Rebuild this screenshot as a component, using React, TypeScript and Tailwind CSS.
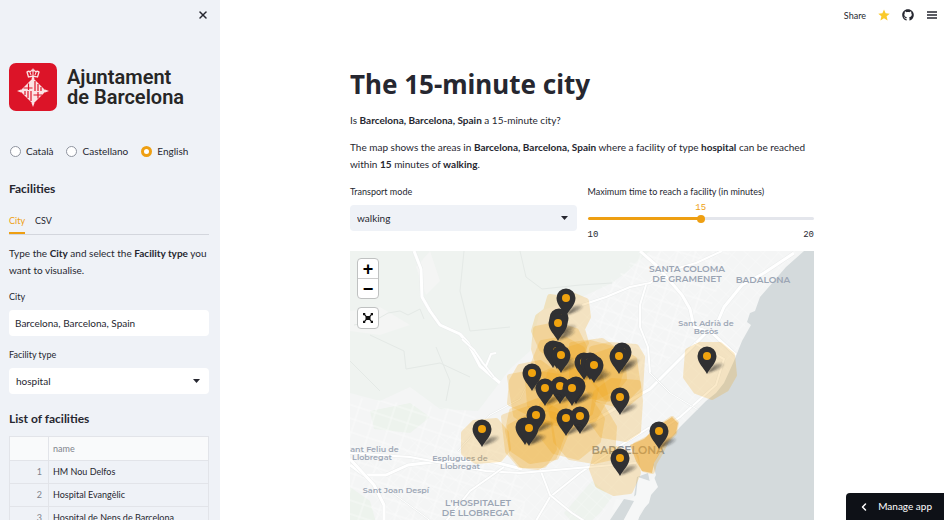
import { useState } from 'react'
import type { ReactNode } from 'react'
import { FaGithub } from 'react-icons/fa'
import { X, ChevronLeft } from 'lucide-react'

const languages = ['Català', 'Castellano', 'English']

const facilities = [
  'HM Nou Delfos',
  'Hospital Evangèlic',
  'Hospital de Nens de Barcelona',
  'Hospital de Barcelona',
]

// head centre of every marker, back to front
const pins = [
  [216, 47],
  [209, 67],
  [208, 72],
  [203, 99],
  [207, 100],
  [211, 104],
  [272, 101],
  [269, 105],
  [234, 111],
  [240, 111],
  [244, 114],
  [357, 105],
  [182, 122],
  [226, 135],
  [210, 135],
  [195, 137],
  [222, 137],
  [270, 146],
  [186, 164],
  [230, 165],
  [216, 167],
  [175, 176],
  [179, 177],
  [132, 178],
  [309, 180],
  [270, 207],
]

// walking areas around the facilities
const areas = [
  'M200 46L214 48L222 44L236 50L238 66L232 78L236 92L230 104L206 108L192 98L184 80L188 66L196 60Z',
  'M186 78L206 74L226 80L234 96L232 118L222 134L202 134L190 118L184 98Z',
  'M192 92L214 88L232 98L238 116L230 138L208 144L192 134L184 112Z',
  'M162 130L170 116L190 112L206 124L208 144L196 158L176 160L160 152Z',
  'M160 126L182 122L210 126L220 144L208 168L184 176L166 164Z',
  'M178 130L206 118L232 122L246 138L240 162L220 174L194 170L180 154Z',
  'M200 122L226 116L250 126L256 146L244 168L220 176L202 164L196 142Z',
  'M214 100L240 92L262 98L272 116L266 136L246 146L222 138L210 120Z',
  'M222 94L252 90L272 104L274 128L258 148L236 144L222 126Z',
  'M242 98L260 94L286 96L292 106L290 142L278 152L256 146L244 130Z',
  'M236 108L266 98L284 108L288 136L270 154L246 148L234 132Z',
  'M246 142L262 130L288 132L290 150L288 180L276 188L252 184L242 170Z',
  'M192 154L216 144L240 150L252 168L248 190L228 206L204 200L190 182Z',
  'M202 158L232 146L252 156L264 176L262 206L244 210L220 206L206 190Z',
  'M154 166L178 158L204 164L212 184L204 206L188 216L170 214L158 200Z',
  'M162 160L188 150L206 160L216 182L206 206L180 210L162 198L158 180Z',
  'M160 176L182 164L200 174L204 198L194 214L172 214L162 202Z',
  'M114 182L124 172L146 170L156 182L158 198L150 208L126 210L114 202Z',
  'M338 100L350 94L370 94L382 104L384 124L376 138L362 146L346 140L336 126Z',
  'M286 194L298 188L308 178L322 168L326 172L324 182L316 190L310 202L304 212L302 220L294 218L290 206Z',
  'M246 204L266 198L286 206L288 222L280 240L264 242L248 234L242 218Z',
]

const roads = [
  { w: 3, d: 'M64 0L71 18L72 46L80 60L90 74L110 83L118 92L130 115L150 132' },
  { w: 2, d: 'M112 88L124 99L133 112L144 126M136 115L141 103L146 102' },
  { w: 2, d: 'M232 54L256 46L280 36L300 32L318 20L346 12L372 0' },
  { w: 3, d: 'M290 0L306 14L320 30L332 44L340 58L344 76L362 82L386 104' },
  { w: 2, d: 'M296 34L290 54L290 76L298 96L300 122' },
  { w: 3, d: 'M444 2L414 22L392 34L374 56L368 70' },
  { w: 3, d: 'M236 174L300 138L346 92L356 82' },
  { w: 2, d: 'M344 92L374 108L366 134L330 166L312 178' },
  { w: 3, d: 'M0 214L14 224L36 224L58 214L92 210L140 210L172 218' },
  { w: 3, d: 'M0 208L24 234L34 254L34 282L44 360' },
  { w: 2, d: 'M180 280L200 246L230 222L268 196L300 176' },
  { w: 2, d: 'M190 218L200 244L222 262L250 280' },
  { w: 2, d: 'M0 202L60 206L136 220L170 222L286 212' },
  { w: 2, d: 'M60 360L96 270L120 240L154 216' },
  { w: 1, d: 'M108 200L140 164L170 148L180 128' },
  { w: 1, d: 'M300 122L320 142L350 160' },
  { w: 1, d: 'M40 240L70 262L120 300L200 320' },
]

const places = [
  { x: 337, y: 21, lines: ['SANTA COLOMA', 'DE GRAMENET'], big: true },
  { x: 413, y: 32, lines: ['BADALONA'], big: true },
  { x: 356, y: 75, lines: ['Sant Adrià de', 'Besòs'], big: false },
  { x: 22, y: 201, lines: ['Sant Feliu de', 'Llobregat'], big: false },
  { x: 110, y: 210, lines: ['Esplugues de', 'Llobregat'], big: false },
  { x: 46, y: 242, lines: ['Sant Joan Despí'], big: false },
  { x: 128, y: 255, lines: ["L'HOSPITALET", 'DE LLOBREGAT'], big: true },
]

function Pin({ x, y }: { x: number; y: number }) {
  return (
    <g transform={`translate(${x} ${y})`}>
      <path d="M0 17L7 9Q13 6 17 8Q17 11 9 14Z" fill="url(#shade)" filter="url(#soft)" />
      <path
        d="M0 18C-3 12-9.500 7-9.500 0A9.500 9.500 0 0 1 9.500 0C9.500 7 3 12 0 18Z"
        fill="#303032"
      />
      <circle r="4" fill="#f0a30f" />
    </g>
  )
}

function CityMap() {
  return (
    <svg
      className="block w-full h-full"
      viewBox="0 0 464 360"
      preserveAspectRatio="xMidYMin slice"
      fontFamily="Montserrat, Inter, sans-serif"
    >
      <defs>
        <linearGradient id="shade" x1="0" x2="1">
          <stop offset="0" stopColor="#222" stopOpacity="0.8" />
          <stop offset="1" stopColor="#222" stopOpacity="0.15" />
        </linearGradient>
        <filter id="soft" x="-30%" y="-50%" width="160%" height="200%">
          <feGaussianBlur stdDeviation="1" />
        </filter>
        <pattern id="streets" width="11" height="11" patternUnits="userSpaceOnUse" patternTransform="rotate(42)">
          <path d="M0 0H11M0 0V11" stroke="#fff" strokeWidth="1" />
        </pattern>
        <pattern id="lanes" width="17" height="13" patternUnits="userSpaceOnUse" patternTransform="rotate(18)">
          <path d="M0 3H17M6 0V13" stroke="#fff" strokeWidth="1" />
        </pattern>
      </defs>
      <rect width="464" height="360" fill="#f4f5f5" />
      <path
        d="M0 0H300L278 20L262 32L232 46L190 60L180 100L160 118L128 160L90 158L60 136L30 150L0 142Z"
        fill="#eff3f0"
      />
      <path d="M80 0L90 30L76 44L66 16ZM0 60L30 56L60 74L30 84L0 80Z" fill="#f4f5f4" />
      <path d="M20 160L60 152L80 166L60 182L24 178ZM0 236L20 250L34 300L0 310Z" fill="#edf3ed" />
      <path d="M242 230L262 246L250 262L230 280L214 262Z" fill="#eef3ee" />
      <path
        d="M232 50L300 0H454L400 60L386 110L310 200L270 240L240 280L230 360H60L30 280L0 200L60 190L150 170L190 100Z"
        fill="url(#streets)"
        opacity="0.4"
      />
      <path d="M0 146L120 160L170 220L190 360H0ZM240 60L290 0H380L350 90L280 130Z" fill="url(#lanes)" opacity="0.5" />
      <path
        d="M4 74L24 70L38 62L50 60L58 64L70 58L74 68M114 0L110 40L120 80L160 76M170 0L176 26L192 38L230 34L262 32M20 84L54 100L56 118L90 112L120 126M86 96L100 130L96 150M0 110L30 140"
        fill="none"
        stroke="#e4e9e6"
      />
      {roads.map((road) => (
        <g key={road.d} fill="none" strokeLinejoin="round">
          <path d={road.d} stroke="#eaecec" strokeWidth={road.w + 1} />
          <path d={road.d} stroke="#fff" strokeWidth={road.w} />
        </g>
      ))}
      <path
        d="M454 0L436 16L424 30L410 46L405 60L400 62L397 71L401 74L392 90L384 110L374 132L366 142L356 150L342 164L330 176L318 190L308 204L303 214L306 224L302 232L300 246L294 258L288 268L286 360H464V0Z"
        fill="#d4dadc"
      />
      <path d="M287 226L298 222L300 232L294 248L284 246Z" fill="#d4dadc" />
      <path
        d="M288 226L300 230L304 226L308 236L301 244L299 252L290 262L287 274L280 290L270 300L264 360H242L248 300L256 286L272 262L262 258L266 248L278 250L286 244Z"
        fill="#f6f7f7"
      />
      <path d="M258 272L274 248L284 250L272 272L266 296L254 290Z" fill="#d4dadc" />
      {places.map((place) => (
        <text
          key={place.lines[0]}
          fill={place.big ? '#9ba5b4' : '#9da7b6'}
          fontSize={place.big ? 9 : 8}
          fontWeight="600"
          textAnchor="middle"
        >
          {place.lines.map((line, i) => (
            <tspan key={line} x={place.x} y={place.y + i * (place.big ? 10 : 8)}>
              {line}
            </tspan>
          ))}
        </text>
      ))}
      <text x="278" y="203" fill="#8b929c" fontSize="11" fontWeight="600" textAnchor="middle">
        BARCELONA
      </text>
      {areas.map((d) => (
        <path key={d} d={d} fill="#f0a30f" stroke="#f0a30f" strokeWidth="6" strokeLinejoin="round" opacity="0.22" />
      ))}
      <path
        d="M280 194L294 188L304 178L322 166L328 172L326 182L316 192L310 202L304 212L302 222L292 220L286 210Z"
        fill="#eca42c"
        opacity="0.5"
      />
      {pins.map(([x, y]) => (
        <Pin key={`${x}-${y}`} x={x} y={y} />
      ))}
    </svg>
  )
}

function Crest() {
  return (
    <svg className="w-12 h-12 shrink-0" viewBox="0 0 48 48" role="img" aria-label="Ajuntament de Barcelona">
      <rect width="48" height="48" rx="7" fill="#dc1428" />
      <path
        d="M19.500 14L18 9Q20 7.500 21 9Q22.500 7 24 8Q25.500 7 27 9Q28 7.500 30 9L28.500 14Q24 12.500 19.500 14Z"
        fill="none"
        stroke="#fbe3e4"
        strokeWidth="1.300"
      />
      <path d="M24 5.500V13M22.500 7H25.500M21 9.500L22 12M27 9.500L26 12" stroke="#fbe3e4" />
      <path d="M24 15L37 28L24 41L11 28Z" fill="#fbe3e4" />
      <g stroke="#dc1428">
        <path d="M19.500 20.500V27M14.500 25H23.500M29 29V35.500M24.500 32H33" strokeWidth="1.200" />
        <path d="M26 18V28M29 21V28M32 24V28M22 28V38M19 28V35M16 28V32" strokeWidth="1.200" />
      </g>
      <path d="M24 12L25.500 16H22.500ZM24 44L25.500 40H22.500ZM8 28L12 26.500V29.500ZM40 28L36 26.500V29.500Z" fill="#fbe3e4" />
    </svg>
  )
}

function Select({ id, label, value, className }: { id: string; label: string; value: string; className: string }) {
  return (
    <div>
      <label htmlFor={id} className="block text-[9px] leading-[14px] mb-[6px]">
        {label}
      </label>
      <div className="relative">
        <select id={id} className={`block w-full h-[26px] rounded-sm px-[7px] appearance-none outline-none ${className}`}>
          <option>{value}</option>
        </select>
        <svg className="absolute right-[9px] top-[11px] w-[7px] h-1 pointer-events-none" viewBox="0 0 7 4">
          <path d="M0 0H7L3.500 4Z" fill="#262730" />
        </svg>
      </div>
    </div>
  )
}

function Heading({ children }: { children: ReactNode }) {
  return <h2 className="text-[12px] leading-4 font-bold">{children}</h2>
}

function Sidebar() {
  const [language, setLanguage] = useState('English')

  return (
    <aside className="w-[220px] shrink-0 bg-[#eff2f7] pl-[9px] pr-[11px] overflow-hidden">
      <div className="flex justify-end pt-[9px]">
        <button aria-label="Close sidebar" className="w-3 h-3">
          <X className="w-3 h-3" strokeWidth={3} />
        </button>
      </div>
      <div className="flex items-center gap-[10px] mt-[42px]">
        <Crest />
        <div className="font-['Roboto',sans-serif] font-semibold text-[20px] leading-5 text-[#262626]">
          Ajuntament
          <br />
          de Barcelona
        </div>
      </div>
      <div className="flex gap-[13px] mt-8 pl-[1px]">
        {languages.map((name) => (
          <label key={name} className="flex items-center gap-[5px] leading-4">
            <input
              type="radio"
              name="language"
              checked={language === name}
              onChange={() => setLanguage(name)}
              className="appearance-none w-[11px] h-[11px] rounded-full bg-white border border-[#8f949f] checked:border-[3px] checked:border-[#ee9f12]"
            />
            {name}
          </label>
        ))}
      </div>
      <div className="mt-[22px]">
        <Heading>Facilities</Heading>
      </div>
      <div className="flex gap-[10px] mt-[13px] border-b border-[#d3d6dd] text-[9px] leading-[14px]">
        <button className="h-6 -mb-px border-b-2 border-[#ee9f12] text-[#ee9f12]">City</button>
        <button className="h-6 pb-[2px]">CSV</button>
      </div>
      <p className="mt-[10px]">
        Type the <b>City</b> and select the <b>Facility type</b> you want to visualise.
      </p>
      <label htmlFor="city" className="block text-[9px] leading-[14px] mt-[11px] mb-[6px]">
        City
      </label>
      <input
        id="city"
        defaultValue="Barcelona, Barcelona, Spain"
        className="block w-full h-[26px] rounded-sm bg-white px-[6px] outline-none"
      />
      <div className="mt-3">
        <Select id="facility" label="Facility type" value="hospital" className="bg-white" />
      </div>
      <div className="mt-[17px]">
        <Heading>List of facilities</Heading>
      </div>
      <table className="w-full mt-[9px] border border-[#e2e4e9] text-[9px] leading-[14px] text-left">
        <thead>
          <tr className="h-6 bg-[#f9fafb] text-[#80838c]">
            <th className="w-[39px] border-r border-[#e2e4e9]"></th>
            <th className="pl-1 font-normal">name</th>
          </tr>
        </thead>
        <tbody>
          {facilities.map((name, i) => (
            <tr key={name} className="h-[23px] border-t border-[#e2e4e9]">
              <td className="pr-[6px] text-right text-[#80838c] border-r border-[#e2e4e9]">{i + 1}</td>
              <td className="pl-1 whitespace-nowrap">{name}</td>
            </tr>
          ))}
        </tbody>
      </table>
    </aside>
  )
}

function Toolbar() {
  return (
    <header className="flex justify-end items-center gap-3 h-[30px] pr-[6px]">
      <button className="text-[9px]">Share</button>
      <button aria-label="Favourite">
        <svg className="w-3 h-3" viewBox="0 0 24 24" fill="#faca2b">
          <path d="M12 1L15.200 8.500L23.500 9.300L17.200 14.700L19.200 23L12 18.500L4.800 23L6.800 14.700L0.500 9.300L8.800 8.500Z" />
        </svg>
      </button>
      <a href="#" aria-label="GitHub">
        <FaGithub className="w-3 h-3" />
      </a>
      <button aria-label="Menu">
        <svg className="w-3 h-3" viewBox="0 0 12 12" stroke="#262730" strokeWidth="1.300">
          <path d="M1 3H11M1 6H11M1 9H11" />
        </svg>
      </button>
    </header>
  )
}

function TimeSlider() {
  const [minutes, setMinutes] = useState(15)
  const filled = (minutes - 10) * 10

  return (
    <div>
      <label htmlFor="minutes" className="block text-[9px] leading-[14px]">
        Maximum time to reach a facility (in minutes)
      </label>
      <div className="font-['Liberation_Mono',monospace] text-[9px] leading-3">
        <div className="mt-[3px] text-center text-[#ee9f12]">{minutes}</div>
        <input
          id="minutes"
          type="range"
          min={10}
          max={20}
          value={minutes}
          onChange={(e) => setMinutes(Number(e.target.value))}
          style={{
            backgroundImage: `linear-gradient(to right, #ee9f12 ${filled}%, #e4e6ec ${filled}%)`,
          }}
          className="block w-full h-[3px] mt-[3px] rounded-full appearance-none [&::-webkit-slider-thumb]:appearance-none [&::-webkit-slider-thumb]:w-2 [&::-webkit-slider-thumb]:h-2 [&::-webkit-slider-thumb]:rounded-full [&::-webkit-slider-thumb]:bg-[#ee9f12]"
        />
        <div className="flex justify-between mt-[9px]">
          <span>10</span>
          <span>20</span>
        </div>
      </div>
    </div>
  )
}

export default function App() {
  return (
    <div className="flex h-screen overflow-hidden bg-white text-[#262730] font-['Lato',sans-serif] text-[10px] leading-[17px]">
      <Sidebar />
      <div className="flex-1 min-w-0">
        <Toolbar />
        <main className="max-w-[464px] mx-auto pt-9">
          <h1 className="font-['Noto_Sans',sans-serif] text-[26px] leading-9 font-bold">The 15-minute city</h1>
          <p className="mt-[10px]">
            Is <b>Barcelona, Barcelona, Spain</b> a 15-minute city?
          </p>
          <p className="mt-[10px]">
            The map shows the areas in <b>Barcelona, Barcelona, Spain</b> where a facility of type <b>hospital</b> can be
            reached within <b>15</b> minutes of <b>walking</b>.
          </p>
          <div className="grid grid-cols-2 gap-[11px] mt-3">
            <Select id="transport" label="Transport mode" value="walking" className="bg-[#eff2f7]" />
            <TimeSlider />
          </div>
          <div className="relative mt-[10px] h-[360px] overflow-hidden">
            <CityMap />
            <div className="absolute left-[7px] top-[7px] flex flex-col gap-2 text-[18px] leading-none font-bold text-black font-['Liberation_Sans',sans-serif]">
              <div className="flex flex-col rounded-sm border border-[#bfc1c1] bg-white">
                <button className="w-5 h-5 border-b border-[#ccc]">+</button>
                <button className="w-5 h-[19px]">−</button>
              </div>
              <button
                aria-label="Full screen"
                className="flex items-center justify-center w-[22px] h-[22px] rounded-sm border border-[#bfc1c1] bg-white"
              >
                <svg className="w-[10px] h-[10px]" viewBox="0 0 10 10" fill="#111">
                  <path d="M2.500 3H7.500V7H2.500Z" />
                  <path d="M0 0H2.500L2 1L3.500 3L2.500 3.500L1 2L0 2.500ZM10 0H7.500L8 1L6.500 3L7.500 3.500L9 2L10 2.500ZM0 10H2.500L2 9L3.500 7L2.500 6.500L1 8L0 7.500ZM10 10H7.500L8 9L6.500 7L7.500 6.500L9 8L10 7.500Z" />
                </svg>
              </button>
            </div>
          </div>
        </main>
      </div>
      <button className="fixed right-0 bottom-0 flex items-center gap-2 h-[27px] pl-3 pr-3 rounded-tl bg-[#0e1117] text-white text-[10px]">
        <ChevronLeft className="w-3 h-3" strokeWidth={3} />
        Manage app
      </button>
    </div>
  )
}
